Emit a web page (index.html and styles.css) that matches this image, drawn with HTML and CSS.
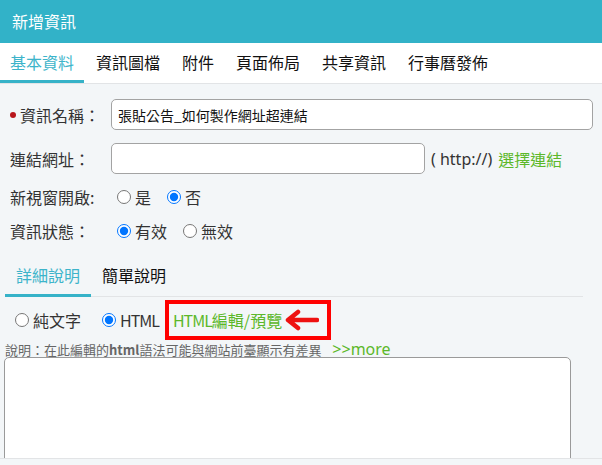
FILE: index.html
```html
<!DOCTYPE html>
<html>
<head>
    <title>新增資訊</title>
    <link rel="stylesheet" href="styles.css">
</head>
<body>
<div class="header">新增資訊</div>

<div class="tabs">
    <div class="tab active">基本資料</div>
    <div class="tab">資訊圖檔</div>
    <div class="tab">附件</div>
    <div class="tab">頁面佈局</div>
    <div class="tab">共享資訊</div>
    <div class="tab">行事曆發佈</div>
</div>

<div class="content">
    <div class="row first">
        <label class="field-label"><span class="req"></span>資訊名稱：</label>
        <input class="text-input wide" type="text" value="張貼公告_如何製作網址超連結">
    </div>
    <div class="row second">
        <label class="field-label">連結網址：</label>
        <input class="text-input short" type="text">
        <span class="hint">( http://)</span>
        <a class="green-link" href="#">選擇連結</a>
    </div>
    <div class="row option">
        <label class="field-label">新視窗開啟:</label>
        <label class="choice"><input type="radio" name="newwin">是</label>
        <label class="choice"><input type="radio" name="newwin" checked>否</label>
    </div>
    <div class="row option">
        <label class="field-label">資訊狀態：</label>
        <label class="choice"><input type="radio" name="status" checked>有效</label>
        <label class="choice"><input type="radio" name="status">無效</label>
    </div>

    <div class="subtabs">
        <div class="subtab active">詳細說明</div>
        <div class="subtab">簡單說明</div>
    </div>

    <div class="row mode">
        <label class="choice"><input type="radio" name="mode">純文字</label>
        <label class="choice"><input type="radio" name="mode" checked><span class="latin">HTML</span></label>
        <span class="callout">
            <a class="green-link" href="#"><span class="latin">HTML</span>編輯/預覽</a>
            <svg class="arrow" width="36" height="22" viewBox="0 0 36 22">
                <path d="M34 11 H6 M15 3 L5 11 L15 19" fill="none" stroke="#ee1111" stroke-width="4.5" stroke-linecap="round" stroke-linejoin="round"/>
            </svg>
        </span>
    </div>
    <div class="note">說明：在此編輯的<b>html</b>語法可能與網站前臺顯示有差異 <a class="green-link more" href="#">&gt;&gt;more</a></div>
    <textarea class="editor"></textarea>
</div>
<div class="footer"></div>
</body>
</html>
```

FILE: styles.css
```css
* {
    padding: 0;
    margin: 0;
    box-sizing: border-box;
}

body {
    background-color: #f3f6f8;
    font-family: "Noto Sans CJK TC", "Noto Sans", sans-serif;
    color: #333;
    width: 602px;
    height: 465px;
    overflow: hidden;
}

.header {
    height: 43px;
    line-height: 43px;
    padding-left: 12px;
    background-color: #32b2c8;
    color: white;
    font-size: 16px;
}

.tabs {
    display: flex;
    height: 41px;
    background-color: white;
    border-bottom: 1px solid #e2e4e6;
}

.tab {
    height: 40px;
    line-height: 38px;
    padding: 0 10px;
    margin-right: 2px;
    font-size: 16px;
    color: #111;
    border-bottom: 3px solid transparent;
}

.tab.active {
    color: #3db4ca;
    border-bottom-color: #36b2c8;
}

.content {
    height: 374px;
    overflow: hidden;
    padding: 15px 0 0 10px;
}

.row {
    display: flex;
    align-items: center;
    font-size: 16px;
}

.row.first {
    height: 31px;
}

.row.second {
    height: 31px;
    margin-top: 13px;
}

.row.option {
    height: 34px;
}

.second + .option {
    margin-top: 6px;
}

.field-label {
    width: 101px;
    display: flex;
    align-items: center;
    color: #333;
}

.req {
    width: 6px;
    height: 6px;
    border-radius: 50%;
    background-color: #b8161c;
    margin-right: 4px;
}

.text-input {
    height: 31px;
    border: 1px solid #a3a3a3;
    border-radius: 5px;
    background-color: white;
    padding: 0 6px;
    font-family: "Noto Sans CJK TC", "Noto Sans", sans-serif;
    font-size: 14px;
    color: #111;
    outline: none;
}

.text-input.wide {
    width: 482px;
}

.text-input.short {
    width: 314px;
}

.hint {
    margin-left: 6px;
    font-family: "Noto Sans", sans-serif;
    color: #333;
}

.green-link {
    color: #5cb82a;
    text-decoration: none;
}

.hint + .green-link {
    margin-left: 6px;
}

.choice {
    display: flex;
    align-items: center;
    margin-right: 10px;
}

.choice input {
    width: 14px;
    height: 14px;
    margin: 0 4px 0 6px;
}

.latin {
    letter-spacing: -1px;
}

.subtabs {
    display: flex;
    width: 578px;
    height: 41px;
    margin: 8px 0 0 -5px;
    border-bottom: 1px solid #e2e4e6;
}

.subtab {
    height: 41px;
    line-height: 38px;
    padding: 0 11px;
    margin-bottom: -1px;
    font-size: 16px;
    color: #111;
    border-bottom: 3px solid transparent;
}

.subtab.active {
    color: #3db4ca;
    border-bottom-color: #36b2c8;
}

.row.mode {
    height: 44px;
    margin-top: 1px;
}

.row.mode .choice input {
    margin-left: 5px;
}

.row.mode .choice {
    margin-right: 16px;
}

.row.mode .choice + .choice {
    margin-right: 6px;
}

.callout {
    display: flex;
    align-items: center;
    height: 40px;
    padding: 0 8px 0 4px;
    border: 4px solid #ff0000;
}

.arrow {
    margin-left: 1px;
}

.note {
    height: 15px;
    line-height: 15px;
    margin-left: -5px;
    font-size: 13px;
    color: #666;
    white-space: nowrap;
}

.note b {
    font-weight: 600;
}

.note .more {
    margin-left: 8px;
    font-family: "Noto Sans", sans-serif;
    font-size: 16px;
}

.editor {
    display: block;
    width: 567px;
    height: 130px;
    margin-left: -6px;
    border: 1px solid #9a9a9a;
    border-radius: 5px;
    background-color: white;
    resize: none;
}

.footer {
    height: 7px;
    border-top: 1px solid #e2e4e6;
}
```
